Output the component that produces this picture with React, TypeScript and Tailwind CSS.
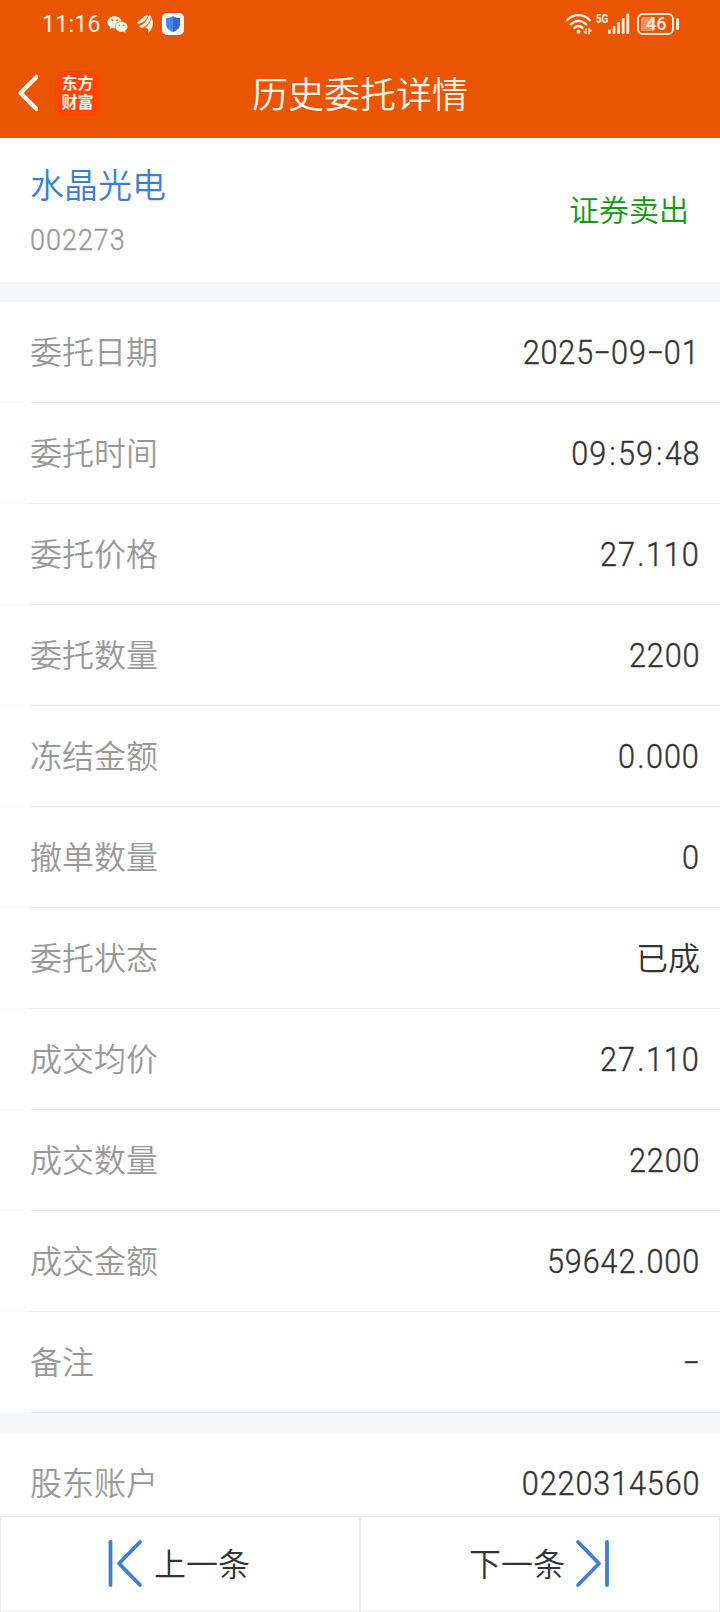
import type { ReactNode } from "react";
import { FaWeixin } from "react-icons/fa";

type Detail = {
  label: string;
  value: string;
};

const orderDetails: Detail[] = [
  { label: "委托日期", value: "2025-09-01" },
  { label: "委托时间", value: "09:59:48" },
  { label: "委托价格", value: "27.110" },
  { label: "委托数量", value: "2200" },
  { label: "冻结金额", value: "0.000" },
  { label: "撤单数量", value: "0" },
  { label: "委托状态", value: "已成" },
  { label: "成交均价", value: "27.110" },
  { label: "成交数量", value: "2200" },
  { label: "成交金额", value: "59642.000" },
  { label: "备注", value: "-" },
];

function StatusBar() {
  return (
    <div className="flex h-12 items-center pl-[42px] pr-[41px] font-normal text-[#fff0e0]">
      <span className="w-[65px] pt-px text-[23px] leading-none tracking-[0.3px]">11:16</span>
      <FaWeixin className="size-[21px]" />
      <svg className="ml-[9px] h-[18px] w-[16px]" viewBox="0 0 16 18" fill="currentColor">
        <path d="M0 7C3 7 5 1 11 0C10 4 7 8 1 9Z" />
        <path d="M2 11C7 10 10 5 12 0L14 1C13 7 10 12 4 13Z" />
        <path d="M8 13C12 10 14 6 14 2C18 8 15 15 11 18C12 15 11 13 8 13Z" />
      </svg>
      <div className="ml-[9px] flex size-[22px] items-center justify-center rounded-[5px] bg-white">
        <svg className="h-[16px] w-[14px]" viewBox="0 0 14 16">
          <path d="M7 0C9 1.6 11 2 14 2V8C14 12 11 14.5 7 16Z" fill="#3568d4" />
          <path d="M7 0C5 1.6 3 2 0 2V8C0 12 3 14.5 7 16Z" fill="#4d86ea" />
        </svg>
      </div>

      <svg className="ml-auto h-[22px] w-[26px]" viewBox="0 0 26 22" fill="none" stroke="currentColor" strokeWidth="2.3" strokeLinecap="round">
        <path d="M1.2 7.2C7.5 0.4 17.5 0.4 23.8 7.2" />
        <path d="M4.8 11.4C9.2 6.7 15.8 6.7 20.2 11.4" />
        <path d="M8.4 15C11 12.3 14 12.3 16.6 15" />
        <circle cx="12.5" cy="18.7" r="2" fill="currentColor" stroke="none" />
        <path d="M20 16V20.5M18 18.5L20 20.5M23 21V16L25 18" strokeWidth="1.4" />
      </svg>
      <span className="mb-[10px] ml-[4px] inline-block w-[12px] origin-left scale-x-[0.78] text-[12.5px] font-bold leading-none">5G</span>
      <svg className="h-[22px] w-[22px]" viewBox="0 0 22 22" fill="currentColor">
        <rect x="0" y="16.5" width="2.8" height="4.5" rx="1" />
        <rect x="4.6" y="13" width="2.8" height="8" rx="1" />
        <rect x="9.2" y="9" width="2.8" height="12" rx="1" />
        <rect x="13.8" y="5" width="2.8" height="16" rx="1" />
        <rect x="18.4" y="0.5" width="2.8" height="20.5" rx="1" />
      </svg>
      <div className="ml-[7px] flex h-[22px] w-[37px] items-center rounded-[6px] border-2 border-current p-[2px]">
        <div className="flex h-full w-[14px] items-center rounded-[2px] bg-[#ff8e5a] pl-[5px]">
          <span className="text-[18px] font-medium leading-none">46</span>
        </div>
      </div>
      <div className="ml-[2px] h-[12px] w-[3px] rounded-sm bg-current" />
    </div>
  );
}

function Header() {
  return (
    <header className="h-[138px] shrink-0 bg-[#ea5504]">
      <StatusBar />
      <div className="grid h-[90px] grid-cols-[1fr_auto_1fr] items-center">
        <div className="flex items-center pl-[16px]">
          <svg className="h-[38px] w-[22px]" viewBox="0 0 22 38" fill="none" stroke="#fff4ea" strokeWidth="4.4" strokeLinecap="round" strokeLinejoin="round">
            <path d="M20.5 3L4.5 19L20.5 35" />
          </svg>
          <div className="ml-[17px] flex size-[45px] flex-col items-center justify-center rounded-[9px] bg-[#ff4500] text-[16px] font-bold leading-[19px] text-[#fff4ea]">
            <span>东方</span>
            <span>财富</span>
          </div>
        </div>
        <h1 className="pt-[5px] text-[36px] leading-none text-[#fff4ea]">历史委托详情</h1>
      </div>
    </header>
  );
}

// digits are condensed, punctuation gets its own advance width
function Value({ children }: { children: string }) {
  return (
    <span className="origin-right scale-x-[0.9] text-[34px] font-light leading-none tracking-[0.98px] text-[#333] [-webkit-text-stroke:0.4px_#333]">
      {children.split("").map((char, i) => {
        if (char === "-") {
          return (
            <span key={i} className="inline-block w-[18.9px] -translate-y-px scale-x-[1.7] text-center tracking-normal">
              -
            </span>
          );
        }
        if (char === ":") {
          return (
            <span key={i} className="inline-block w-[12.2px] text-center tracking-normal">
              :
            </span>
          );
        }
        if (char === ".") {
          return (
            <span key={i} className="inline-block w-[11.3px] text-center tracking-normal">
              .
            </span>
          );
        }
        return char;
      })}
    </span>
  );
}

function DetailRow({ label, value }: Detail) {
  return (
    <div className="h-[101px]">
      <div className="flex h-[100px] items-center justify-between pl-[30px] pr-[20px]">
        <span className="pt-[2px] text-[32px] leading-none text-[#999]">{label}</span>
        {value === "已成" ? (
          <span className="pt-[2px] text-[32px] leading-none text-[#333]">{value}</span>
        ) : (
          <Value>{value}</Value>
        )}
      </div>
      <div className="h-px bg-[#fafafa] pl-[30px]">
        <div className="h-px bg-[#e9eaec]" />
      </div>
    </div>
  );
}

function PagerButton({ children }: { children: ReactNode }) {
  return (
    <button className="flex h-full w-1/2 items-center border border-[#ebebeb] bg-white text-[32px] leading-none text-[#333]">
      {children}
    </button>
  );
}

export default function App() {
  return (
    <div className="flex h-[1612px] w-[720px] flex-col overflow-hidden bg-white font-['Roboto','Noto_Sans_CJK_SC',sans-serif] font-[350]">
      <Header />

      <section className="flex h-[144px] shrink-0 items-center justify-between px-[30px]">
        <div className="flex flex-col pt-[5px]">
          <span className="text-[34px] leading-[50px] text-[#3d7fcf]">水晶光电</span>
          <span className="mt-[4px] origin-left scale-x-[0.9] text-[30px] font-light leading-[50px] tracking-[1.1px] text-[#999] [-webkit-text-stroke:0.4px_#999]">002273</span>
        </div>
        <span className="pr-px pt-px text-[30px] leading-none text-[#109b10]">证券卖出</span>
      </section>

      <div className="h-[20px] shrink-0 bg-[#f6f7f9]" />

      <section className="shrink-0">
        {orderDetails.map((detail) => (
          <DetailRow key={detail.label} {...detail} />
        ))}
      </section>

      <div className="h-[20px] shrink-0 bg-[#f6f7f9]" />

      <section className="h-[83px] shrink-0 overflow-hidden">
        <DetailRow label="股东账户" value="0220314560" />
      </section>

      <footer className="flex h-[96px] shrink-0">
        <PagerButton>
          <svg className="ml-[106px] h-[50px] w-[38px]" viewBox="0 0 38 50" fill="none" stroke="#3f7fcd" strokeWidth="3.8" strokeLinecap="round" strokeLinejoin="round">
            <path d="M3.5 3V46" />
            <path d="M33 3L12 24.5L33 46" />
          </svg>
          <span className="ml-[9px] pt-[2px]">上一条</span>
        </PagerButton>
        <PagerButton>
          <span className="ml-[108px] pt-[2px]">下一条</span>
          <svg className="ml-[9px] h-[50px] w-[38px]" viewBox="0 0 38 50" fill="none" stroke="#3f7fcd" strokeWidth="3.8" strokeLinecap="round" strokeLinejoin="round">
            <path d="M4 3L25 24.5L4 46" />
            <path d="M33 3V46" />
          </svg>
        </PagerButton>
      </footer>
    </div>
  );
}
